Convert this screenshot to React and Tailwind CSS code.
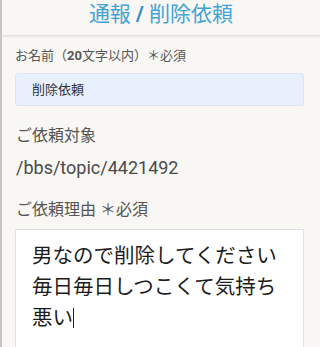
export default function App() {
  return (
    <div
      className="w-[320px] h-[347px] overflow-hidden bg-[#f8f7f3] border-l-2 border-[#c6c6c4]"
      style={{ fontFamily: "Roboto, 'Noto Sans CJK JP', sans-serif" }}
    >
      <header className="h-[36px] border-b border-[#e2e2df] shadow-[0_1px_1px_rgba(0,0,0,0.05)] flex justify-center">
        <h1 className="text-[21px] leading-[28px] text-[#43a3d5] font-normal">
          通報 <span className="font-bold text-[#2f8ac4]">/</span> 削除依頼
        </h1>
      </header>

      <main className="pl-[13px] pr-[16px] flex flex-col">
        <label className="mt-[10px] text-[13px] leading-[20px] text-[#555]">
          お名前（<span className="font-bold">20</span>文字以内）＊必須
        </label>
        <div className="mt-[7px] h-[33px] shrink-0 rounded-[3px] border border-[#dfe4ec] bg-[#e8f0fe] flex items-center pl-[16px] text-[13px] text-[#333]">
          削除依頼
        </div>

        <div className="mt-[18px] text-[16px] leading-[24px] text-[#555] pl-[1px]">ご依頼対象</div>
        <div className="mt-[8px] text-[18px] leading-[24px] text-[#4a4a4a] pl-[1px]">/bbs/topic/4421492</div>

        <div className="mt-[18px] text-[16px] leading-[24px] text-[#555] pl-[1px]">ご依頼理由 ＊必須</div>

        <div className="relative mt-[7px] h-[140px] shrink-0 bg-white border border-[#e2e2e2] pl-[16px] pr-[8px] pt-[9px] text-[20.5px] leading-[31px] text-[#1c1c1c] font-['Noto_Sans_CJK_JP',sans-serif]">
          <div>男なので削除してください</div>
          <div>毎日毎日しつこくて気持ち</div>
          <div>
            悪い<span className="inline-block w-px h-[20px] bg-[#222] align-[-3px]"></span>
          </div>
        </div>
      </main>
    </div>
  );
}
